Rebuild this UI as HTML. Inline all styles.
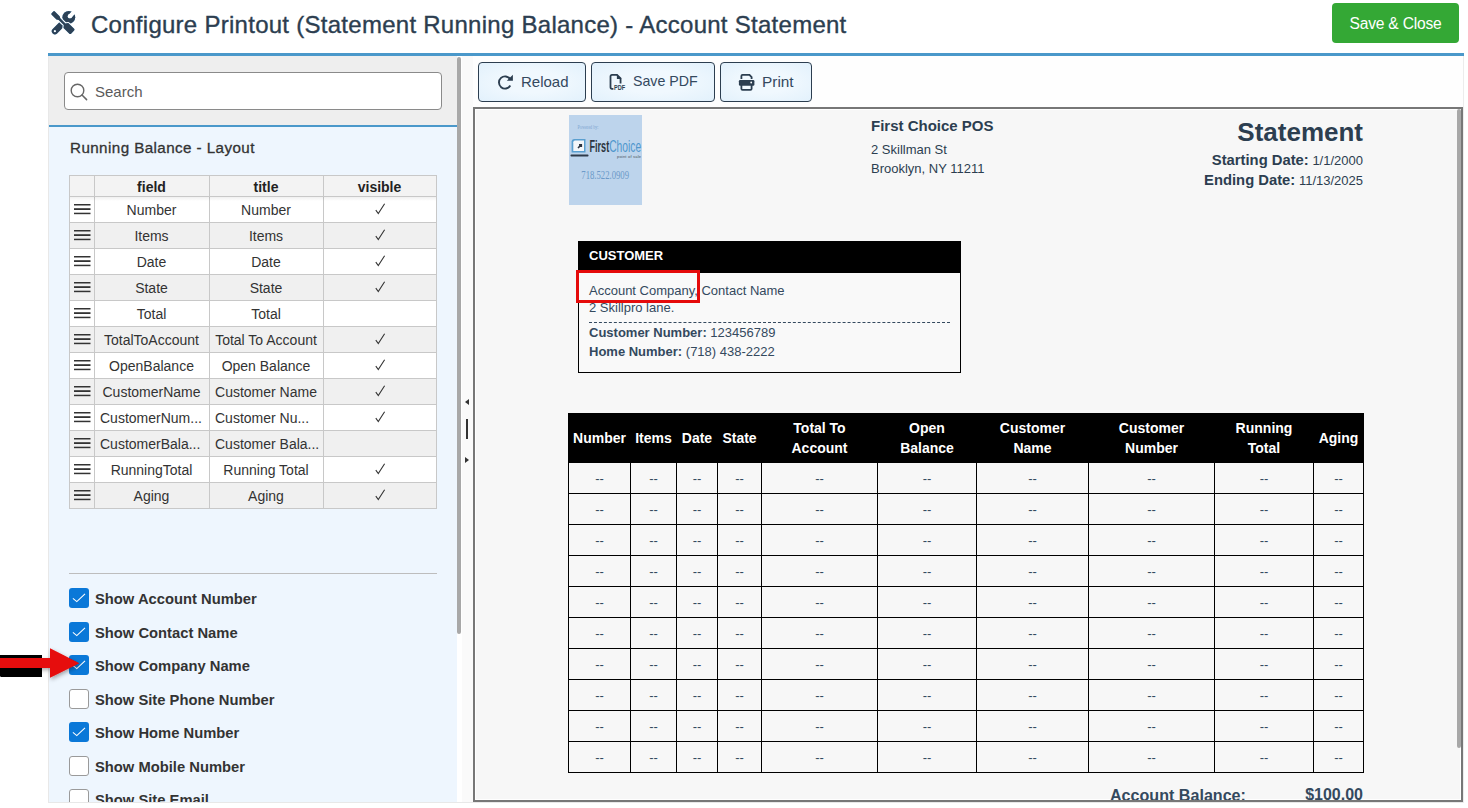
<!DOCTYPE html><html><head><meta charset="utf-8"><style>
*{box-sizing:border-box;margin:0;padding:0}
html,body{width:1468px;height:808px;overflow:hidden;background:#fff;font-family:"Liberation Sans",sans-serif;position:relative}
.abs{position:absolute}
.t{position:absolute;white-space:nowrap;line-height:1}
#title{left:91px;top:13px;font-size:24px;letter-spacing:0.27px;color:#2c3e50;-webkit-text-stroke:0.35px #2c3e50}
#save{left:1332px;top:3px;width:127px;height:40px;background:#34a835;border-radius:4px;color:#fff;font-size:15.6px;letter-spacing:-0.2px;text-align:center;line-height:41px}
#bluebar{left:48px;top:53px;width:1416px;height:3px;background:#4a98ca}
#lp-top{left:48px;top:56px;width:409px;height:69px;background:#eeeeee}
#lp-line{left:49px;top:125px;width:409px;height:2px;background:#4a98ca}
#lp-bot{left:48px;top:127px;width:409px;height:675px;background:#eef6fe}
#search{left:64px;top:72px;width:378px;height:38px;background:#fff;border:1px solid #8a8a8a;border-radius:4px}
#lscroll{left:457px;top:57px;width:4px;height:577px;background:#a8a8a8;border-radius:2px}
#splitter{left:461px;top:56px;width:12px;height:746px;background:#fafafa;border-left:1px solid #fff}
#toolbar{left:473px;top:56px;width:990px;height:51px;background:#fefefe}
#preview{left:473px;top:107px;width:990px;height:695px;border:2px solid #777;background:#f7f7f7;box-shadow:inset 1px 1px 0 #fff,inset -1px -1px 0 #fff;overflow:hidden}
#pscroll{left:1457px;top:109px;width:4px;height:639px;background:#a8a8a8;border-radius:2px}
.btn{position:absolute;top:62px;height:40px;border:1px solid #2c3e50;border-radius:4px;background:radial-gradient(ellipse at center,#f0f8fe 40%,#e2f1fc 100%);color:#34495e;font-size:15px}
.btn span{position:absolute;top:11px;line-height:1;white-space:nowrap}
.btn svg{position:absolute}
.lt{position:absolute;font-size:14px;color:#333;text-align:center;white-space:nowrap;line-height:1}
.cb{position:absolute;left:69px;width:20px;height:20px;border-radius:3px;background:#0a78d8}
.cbo{background:#fff;border:1px solid #9a9a9a}
.cbl{position:absolute;left:95px;font-size:14.75px;font-weight:700;color:#333;white-space:nowrap;line-height:1}
.pv{position:absolute;white-space:nowrap;line-height:1;color:#2c3e50}
.gl{position:absolute;background:#000}
.th{position:absolute;color:#fff;font-weight:700;font-size:14px;line-height:20px;text-align:center}
.td{position:absolute;color:#34495e;font-size:13px;line-height:1;text-align:center}
</style></head><body><div class="abs" id="bluebar"></div><svg class="abs" style="left:48px;top:8px;filter:drop-shadow(0 0 0.7px rgba(100,180,235,0.85))" width="32" height="30" viewBox="0 0 32 30">
<defs><mask id="wm" maskUnits="userSpaceOnUse" x="0" y="0" width="32" height="30">
<rect x="0" y="0" width="32" height="30" fill="#fff"/>
<circle cx="21.9" cy="8.2" r="2.3" fill="#000"/>
<g transform="rotate(-45 21.9 8.2)"><rect x="21.9" y="6.1" width="10" height="4.2" fill="#000"/></g>
<circle cx="6.9" cy="23.2" r="1.15" fill="#000"/>
<g transform="translate(4.6 4.5) rotate(44.4)"><path d="M0.9 -2.3 L7.6 -2.3 L9.6 -1.2 L16.8 -1.2 L18.6 -3.4 L26.8 -3.4 Q28 -3.4 28 -2.2 L28 2.2 Q28 3.4 26.8 3.4 L18.6 3.4 L16.8 1.2 L9.6 1.2 L7.6 2.3 L0.9 2.3 Q-0.2 2.3 -0.2 1.2 L-0.2 -1.2 Q-0.2 -2.3 0.9 -2.3Z" fill="#000" stroke="#000" stroke-width="2.4" stroke-linejoin="round"/></g>
</mask></defs>
<g fill="#2c4156">
 <g mask="url(#wm)">
  <line x1="6.9" y1="23.2" x2="20.5" y2="9.5" stroke="#2c4156" stroke-width="6.2" stroke-linecap="round"/>
  <circle cx="20.8" cy="9.3" r="6.4"/>
 </g>
 <g transform="translate(4.6 4.5) rotate(44.4)"><path d="M0.9 -2.3 L7.6 -2.3 L9.6 -1.2 L16.8 -1.2 L18.6 -3.4 L26.8 -3.4 Q28 -3.4 28 -2.2 L28 2.2 Q28 3.4 26.8 3.4 L18.6 3.4 L16.8 1.2 L9.6 1.2 L7.6 2.3 L0.9 2.3 Q-0.2 2.3 -0.2 1.2 L-0.2 -1.2 Q-0.2 -2.3 0.9 -2.3Z"/></g>
</g>
</svg><div class="t" id="title">Configure Printout (Statement Running Balance) - Account Statement</div><div class="abs" id="save">Save &amp; Close</div><div class="abs" id="lp-top"></div><div class="abs" id="lp-line"></div><div class="abs" id="lp-bot"></div><div class="abs" id="search"></div><svg class="abs" style="left:69px;top:81.5px" width="20" height="20" viewBox="0 0 20 20"><circle cx="8.5" cy="8.5" r="6.3" fill="none" stroke="#666" stroke-width="1.4"/><line x1="13" y1="13" x2="17.6" y2="17.6" stroke="#666" stroke-width="1.5" stroke-linecap="round"/></svg><div class="t" style="left:95px;top:84px;font-size:15px;color:#5a5a5a">Search</div><div class="abs" id="lscroll"></div><div class="abs" id="splitter"></div><div class="abs" id="toolbar"></div><svg class="abs" style="left:463px;top:396px" width="8" height="70" viewBox="0 0 8 70"><path d="M6 3 L2 6 L6 9Z" fill="#333"/><rect x="3" y="23" width="2" height="20" fill="#333"/><path d="M2 61 L6 64 L2 67Z" fill="#333"/></svg><div class="t" style="left:70px;top:140px;font-size:15.2px;letter-spacing:0.42px;-webkit-text-stroke:0.3px #333;color:#333">Running Balance - Layout</div><div class="abs" style="left:69px;top:175px;width:368px;height:21px;background:#f3f3f3"></div><div class="abs" style="left:69px;top:196px;width:368px;height:26px;background:#ffffff"></div><div class="abs" style="left:69px;top:222px;width:368px;height:26px;background:#f0f0f0"></div><div class="abs" style="left:69px;top:248px;width:368px;height:26px;background:#ffffff"></div><div class="abs" style="left:69px;top:274px;width:368px;height:26px;background:#f0f0f0"></div><div class="abs" style="left:69px;top:300px;width:368px;height:26px;background:#ffffff"></div><div class="abs" style="left:69px;top:326px;width:368px;height:26px;background:#f0f0f0"></div><div class="abs" style="left:69px;top:352px;width:368px;height:26px;background:#ffffff"></div><div class="abs" style="left:69px;top:378px;width:368px;height:26px;background:#f0f0f0"></div><div class="abs" style="left:69px;top:404px;width:368px;height:26px;background:#ffffff"></div><div class="abs" style="left:69px;top:430px;width:368px;height:26px;background:#f0f0f0"></div><div class="abs" style="left:69px;top:456px;width:368px;height:26px;background:#ffffff"></div><div class="abs" style="left:69px;top:482px;width:368px;height:26px;background:#f0f0f0"></div><div class="abs" style="left:69px;top:175px;width:1px;height:334px;background:#c8c8c8"></div><div class="abs" style="left:94px;top:175px;width:1px;height:334px;background:#c8c8c8"></div><div class="abs" style="left:209px;top:175px;width:1px;height:334px;background:#c8c8c8"></div><div class="abs" style="left:323px;top:175px;width:1px;height:334px;background:#c8c8c8"></div><div class="abs" style="left:436px;top:175px;width:1px;height:334px;background:#c8c8c8"></div><div class="abs" style="left:69px;top:175px;width:368px;height:1px;background:#c8c8c8"></div><div class="abs" style="left:69px;top:196px;width:368px;height:1px;background:#c8c8c8"></div><div class="abs" style="left:69px;top:222px;width:368px;height:1px;background:#c8c8c8"></div><div class="abs" style="left:69px;top:248px;width:368px;height:1px;background:#c8c8c8"></div><div class="abs" style="left:69px;top:274px;width:368px;height:1px;background:#c8c8c8"></div><div class="abs" style="left:69px;top:300px;width:368px;height:1px;background:#c8c8c8"></div><div class="abs" style="left:69px;top:326px;width:368px;height:1px;background:#c8c8c8"></div><div class="abs" style="left:69px;top:352px;width:368px;height:1px;background:#c8c8c8"></div><div class="abs" style="left:69px;top:378px;width:368px;height:1px;background:#c8c8c8"></div><div class="abs" style="left:69px;top:404px;width:368px;height:1px;background:#c8c8c8"></div><div class="abs" style="left:69px;top:430px;width:368px;height:1px;background:#c8c8c8"></div><div class="abs" style="left:69px;top:456px;width:368px;height:1px;background:#c8c8c8"></div><div class="abs" style="left:69px;top:482px;width:368px;height:1px;background:#c8c8c8"></div><div class="abs" style="left:69px;top:508px;width:368px;height:1px;background:#c8c8c8"></div><div class="abs" style="left:70px;top:197px;width:366px;height:4px;background:linear-gradient(rgba(0,0,0,0.06),rgba(0,0,0,0))"></div><div class="lt" style="left:94px;width:115px;top:180px;font-weight:700;color:#222">field</div><div class="lt" style="left:209px;width:114px;top:180px;font-weight:700;color:#222">title</div><div class="lt" style="left:323px;width:113px;top:180px;font-weight:700;color:#222">visible</div><svg class="abs" style="left:74px;top:203px" width="17" height="12" viewBox="0 0 17 12"><rect x="0" y="1" width="16.5" height="1.5" fill="#333"/><rect x="0" y="5.2" width="16.5" height="1.8" fill="#333"/><rect x="0" y="9.7" width="16.5" height="1.5" fill="#333"/></svg><div class="lt" style="left:94px;width:115px;top:203px">Number</div><div class="lt" style="left:209px;width:114px;top:203px">Number</div><svg class="abs" style="left:375px;top:203px" width="11" height="12" viewBox="0 0 11 12"><path d="M0.8 7.2 L3.3 10.6 L9.6 0.8" fill="none" stroke="#333" stroke-width="1.1"/></svg><svg class="abs" style="left:74px;top:229px" width="17" height="12" viewBox="0 0 17 12"><rect x="0" y="1" width="16.5" height="1.5" fill="#333"/><rect x="0" y="5.2" width="16.5" height="1.8" fill="#333"/><rect x="0" y="9.7" width="16.5" height="1.5" fill="#333"/></svg><div class="lt" style="left:94px;width:115px;top:229px">Items</div><div class="lt" style="left:209px;width:114px;top:229px">Items</div><svg class="abs" style="left:375px;top:229px" width="11" height="12" viewBox="0 0 11 12"><path d="M0.8 7.2 L3.3 10.6 L9.6 0.8" fill="none" stroke="#333" stroke-width="1.1"/></svg><svg class="abs" style="left:74px;top:255px" width="17" height="12" viewBox="0 0 17 12"><rect x="0" y="1" width="16.5" height="1.5" fill="#333"/><rect x="0" y="5.2" width="16.5" height="1.8" fill="#333"/><rect x="0" y="9.7" width="16.5" height="1.5" fill="#333"/></svg><div class="lt" style="left:94px;width:115px;top:255px">Date</div><div class="lt" style="left:209px;width:114px;top:255px">Date</div><svg class="abs" style="left:375px;top:255px" width="11" height="12" viewBox="0 0 11 12"><path d="M0.8 7.2 L3.3 10.6 L9.6 0.8" fill="none" stroke="#333" stroke-width="1.1"/></svg><svg class="abs" style="left:74px;top:281px" width="17" height="12" viewBox="0 0 17 12"><rect x="0" y="1" width="16.5" height="1.5" fill="#333"/><rect x="0" y="5.2" width="16.5" height="1.8" fill="#333"/><rect x="0" y="9.7" width="16.5" height="1.5" fill="#333"/></svg><div class="lt" style="left:94px;width:115px;top:281px">State</div><div class="lt" style="left:209px;width:114px;top:281px">State</div><svg class="abs" style="left:375px;top:281px" width="11" height="12" viewBox="0 0 11 12"><path d="M0.8 7.2 L3.3 10.6 L9.6 0.8" fill="none" stroke="#333" stroke-width="1.1"/></svg><svg class="abs" style="left:74px;top:307px" width="17" height="12" viewBox="0 0 17 12"><rect x="0" y="1" width="16.5" height="1.5" fill="#333"/><rect x="0" y="5.2" width="16.5" height="1.8" fill="#333"/><rect x="0" y="9.7" width="16.5" height="1.5" fill="#333"/></svg><div class="lt" style="left:94px;width:115px;top:307px">Total</div><div class="lt" style="left:209px;width:114px;top:307px">Total</div><svg class="abs" style="left:74px;top:333px" width="17" height="12" viewBox="0 0 17 12"><rect x="0" y="1" width="16.5" height="1.5" fill="#333"/><rect x="0" y="5.2" width="16.5" height="1.8" fill="#333"/><rect x="0" y="9.7" width="16.5" height="1.5" fill="#333"/></svg><div class="lt" style="left:94px;width:115px;top:333px">TotalToAccount</div><div class="lt" style="left:209px;width:114px;top:333px">Total To Account</div><svg class="abs" style="left:375px;top:333px" width="11" height="12" viewBox="0 0 11 12"><path d="M0.8 7.2 L3.3 10.6 L9.6 0.8" fill="none" stroke="#333" stroke-width="1.1"/></svg><svg class="abs" style="left:74px;top:359px" width="17" height="12" viewBox="0 0 17 12"><rect x="0" y="1" width="16.5" height="1.5" fill="#333"/><rect x="0" y="5.2" width="16.5" height="1.8" fill="#333"/><rect x="0" y="9.7" width="16.5" height="1.5" fill="#333"/></svg><div class="lt" style="left:94px;width:115px;top:359px">OpenBalance</div><div class="lt" style="left:209px;width:114px;top:359px">Open Balance</div><svg class="abs" style="left:375px;top:359px" width="11" height="12" viewBox="0 0 11 12"><path d="M0.8 7.2 L3.3 10.6 L9.6 0.8" fill="none" stroke="#333" stroke-width="1.1"/></svg><svg class="abs" style="left:74px;top:385px" width="17" height="12" viewBox="0 0 17 12"><rect x="0" y="1" width="16.5" height="1.5" fill="#333"/><rect x="0" y="5.2" width="16.5" height="1.8" fill="#333"/><rect x="0" y="9.7" width="16.5" height="1.5" fill="#333"/></svg><div class="lt" style="left:94px;width:115px;top:385px">CustomerName</div><div class="lt" style="left:209px;width:114px;top:385px">Customer Name</div><svg class="abs" style="left:375px;top:385px" width="11" height="12" viewBox="0 0 11 12"><path d="M0.8 7.2 L3.3 10.6 L9.6 0.8" fill="none" stroke="#333" stroke-width="1.1"/></svg><svg class="abs" style="left:74px;top:411px" width="17" height="12" viewBox="0 0 17 12"><rect x="0" y="1" width="16.5" height="1.5" fill="#333"/><rect x="0" y="5.2" width="16.5" height="1.8" fill="#333"/><rect x="0" y="9.7" width="16.5" height="1.5" fill="#333"/></svg><div class="lt" style="left:100px;top:411px;text-align:left">CustomerNum...</div><div class="lt" style="left:215px;top:411px;text-align:left">Customer Nu...</div><svg class="abs" style="left:375px;top:411px" width="11" height="12" viewBox="0 0 11 12"><path d="M0.8 7.2 L3.3 10.6 L9.6 0.8" fill="none" stroke="#333" stroke-width="1.1"/></svg><svg class="abs" style="left:74px;top:437px" width="17" height="12" viewBox="0 0 17 12"><rect x="0" y="1" width="16.5" height="1.5" fill="#333"/><rect x="0" y="5.2" width="16.5" height="1.8" fill="#333"/><rect x="0" y="9.7" width="16.5" height="1.5" fill="#333"/></svg><div class="lt" style="left:100px;top:437px;text-align:left">CustomerBala...</div><div class="lt" style="left:215px;top:437px;text-align:left">Customer Bala...</div><svg class="abs" style="left:74px;top:463px" width="17" height="12" viewBox="0 0 17 12"><rect x="0" y="1" width="16.5" height="1.5" fill="#333"/><rect x="0" y="5.2" width="16.5" height="1.8" fill="#333"/><rect x="0" y="9.7" width="16.5" height="1.5" fill="#333"/></svg><div class="lt" style="left:94px;width:115px;top:463px">RunningTotal</div><div class="lt" style="left:209px;width:114px;top:463px">Running Total</div><svg class="abs" style="left:375px;top:463px" width="11" height="12" viewBox="0 0 11 12"><path d="M0.8 7.2 L3.3 10.6 L9.6 0.8" fill="none" stroke="#333" stroke-width="1.1"/></svg><svg class="abs" style="left:74px;top:489px" width="17" height="12" viewBox="0 0 17 12"><rect x="0" y="1" width="16.5" height="1.5" fill="#333"/><rect x="0" y="5.2" width="16.5" height="1.8" fill="#333"/><rect x="0" y="9.7" width="16.5" height="1.5" fill="#333"/></svg><div class="lt" style="left:94px;width:115px;top:489px">Aging</div><div class="lt" style="left:209px;width:114px;top:489px">Aging</div><svg class="abs" style="left:375px;top:489px" width="11" height="12" viewBox="0 0 11 12"><path d="M0.8 7.2 L3.3 10.6 L9.6 0.8" fill="none" stroke="#333" stroke-width="1.1"/></svg><div class="abs" style="left:69px;top:573px;width:368px;height:1px;background:#bdbdbd"></div><div class="cb" style="top:588px"><svg width="20" height="20" viewBox="0 0 20 20" style="position:absolute;left:0;top:0"><path d="M3.9 10.4 L7.8 13.6 L16 5.9" fill="none" stroke="#fff" stroke-width="1.1"/></svg></div><div class="cbl" style="top:592px">Show Account Number</div><div class="cb" style="top:622px"><svg width="20" height="20" viewBox="0 0 20 20" style="position:absolute;left:0;top:0"><path d="M3.9 10.4 L7.8 13.6 L16 5.9" fill="none" stroke="#fff" stroke-width="1.1"/></svg></div><div class="cbl" style="top:626px">Show Contact Name</div><div class="cb" style="top:655px"><svg width="20" height="20" viewBox="0 0 20 20" style="position:absolute;left:0;top:0"><path d="M3.9 10.4 L7.8 13.6 L16 5.9" fill="none" stroke="#fff" stroke-width="1.1"/></svg></div><div class="cbl" style="top:659px">Show Company Name</div><div class="cb cbo" style="top:689px"></div><div class="cbl" style="top:693px">Show Site Phone Number</div><div class="cb" style="top:722px"><svg width="20" height="20" viewBox="0 0 20 20" style="position:absolute;left:0;top:0"><path d="M3.9 10.4 L7.8 13.6 L16 5.9" fill="none" stroke="#fff" stroke-width="1.1"/></svg></div><div class="cbl" style="top:726px">Show Home Number</div><div class="cb cbo" style="top:756px"></div><div class="cbl" style="top:760px">Show Mobile Number</div><div class="cb cbo" style="top:789px"></div><div class="cbl" style="top:793px">Show Site Email</div><div class="abs" style="left:48px;top:802px;width:1416px;height:6px;background:#fff"></div><div class="abs" style="left:48px;top:802px;width:1416px;height:1px;background:#e8e8e8"></div><div class="abs" style="left:48px;top:56px;width:1px;height:747px;background:#e8e8e8"></div><div class="abs" style="left:1463px;top:56px;width:1px;height:747px;background:#ececec"></div><div class="abs" id="preview"></div><div class="abs" style="left:475px;top:109px;width:986px;height:691px;overflow:hidden"><div class="abs" style="left:-475px;top:-109px;width:1468px;height:808px"><div class="abs" style="left:569px;top:115px;width:73px;height:90px;background:#bdd4ec;overflow:hidden">
<svg style="position:absolute;left:0;top:0" width="73" height="20"><text x="8.5" y="13.6" font-family="Liberation Serif" font-size="6" fill="#7ea6d2" textLength="21" lengthAdjust="spacingAndGlyphs">Powered by:</text></svg>
<svg style="position:absolute;left:0;top:22px" width="73" height="22" viewBox="0 0 73 22">
<path d="M2.6 15.5 L2.6 4.5 Q2.6 2 5 2 L16.5 2 L16.5 15.5Z" fill="#5a9fd0"/>
<path d="M4.3 14 L4.3 5.2 Q4.3 3.6 6 3.6 L15 3.6 L15 14Z" fill="#f4f6f9"/>
<path d="M9 11 L12 8 M10 7.8 L12.3 7.8 L12.3 10" stroke="#2a3340" stroke-width="1.6" fill="none"/>
<rect x="1.5" y="17.5" width="18" height="2" rx="0.8" fill="#2f3b4a"/>
<text x="20.5" y="15.2" font-family="Liberation Sans" font-weight="700" font-size="16" fill="#2b3440" textLength="19.7" lengthAdjust="spacingAndGlyphs">First</text>
<text x="40.2" y="15.2" font-family="Liberation Sans" font-size="16" fill="#4f97cc" textLength="32" lengthAdjust="spacingAndGlyphs">Choice</text>
<text x="48" y="20.6" font-family="Liberation Sans" font-size="4" fill="#4a5460" textLength="24" lengthAdjust="spacing">point of sale</text>
</svg>
<svg style="position:absolute;left:0;top:55px" width="73" height="14" viewBox="0 0 73 14"><text x="12.3" y="9.3" font-family="Liberation Serif" font-size="12.4" fill="#6c9ac9" textLength="47.7" lengthAdjust="spacingAndGlyphs">718.522.0909</text></svg>
</div><div class="pv" style="left:871px;top:118px;font-size:15px;font-weight:700">First Choice POS</div><div class="pv" style="left:871px;top:143px;font-size:13px">2 Skillman St</div><div class="pv" style="left:871px;top:162px;font-size:13px">Brooklyn, NY 11211</div><div class="pv" style="left:1000px;width:363px;text-align:right;top:119px;font-size:26px;font-weight:700">Statement</div><div class="pv" style="left:1000px;width:363px;text-align:right;top:153px;font-size:13px"><b style="font-size:14.8px">Starting Date:</b> 1/1/2000</div><div class="pv" style="left:1000px;width:363px;text-align:right;top:173px;font-size:13px"><b style="font-size:14.8px">Ending Date:</b> 11/13/2025</div><div class="abs" style="left:578px;top:241px;width:383px;height:132px;border:1px solid #000;background:#f9f9f9"></div><div class="abs" style="left:578px;top:241px;width:383px;height:32px;background:#000"></div><div class="pv" style="left:589px;top:249px;font-size:13px;font-weight:700;color:#fff">CUSTOMER</div><div class="pv" style="left:589px;top:284px;font-size:13px;color:#34495e">Account Company, Contact Name</div><div class="pv" style="left:589px;top:301px;font-size:13px;color:#34495e">2 Skillpro lane.</div><div class="abs" style="left:589px;top:322px;width:361px;height:0;border-top:1px dashed #34495e"></div><div class="pv" style="left:589px;top:326px;font-size:13px;color:#34495e"><b>Customer Number:</b> 123456789</div><div class="pv" style="left:589px;top:345px;font-size:13px;color:#34495e"><b>Home Number:</b> (718) 438-2222</div><div class="abs" style="left:576px;top:270px;width:124px;height:33px;border:3px solid #e50b0b"></div><div class="abs" style="left:568px;top:413px;width:796px;height:50px;background:#000"></div><div class="th" style="left:568px;width:63px;top:428px">Number</div><div class="th" style="left:630px;width:47px;top:428px">Items</div><div class="th" style="left:676px;width:42px;top:428px">Date</div><div class="th" style="left:717px;width:45px;top:428px">State</div><div class="th" style="left:761px;width:117px;top:418px">Total To<br>Account</div><div class="th" style="left:877px;width:100px;top:418px">Open<br>Balance</div><div class="th" style="left:976px;width:113px;top:418px">Customer<br>Name</div><div class="th" style="left:1088px;width:127px;top:418px">Customer<br>Number</div><div class="th" style="left:1214px;width:100px;top:418px">Running<br>Total</div><div class="th" style="left:1313px;width:51px;top:428px">Aging</div><div class="gl" style="left:568px;top:413px;width:1px;height:360px"></div><div class="gl" style="left:630px;top:413px;width:1px;height:360px"></div><div class="gl" style="left:676px;top:413px;width:1px;height:360px"></div><div class="gl" style="left:717px;top:413px;width:1px;height:360px"></div><div class="gl" style="left:761px;top:413px;width:1px;height:360px"></div><div class="gl" style="left:877px;top:413px;width:1px;height:360px"></div><div class="gl" style="left:976px;top:413px;width:1px;height:360px"></div><div class="gl" style="left:1088px;top:413px;width:1px;height:360px"></div><div class="gl" style="left:1214px;top:413px;width:1px;height:360px"></div><div class="gl" style="left:1313px;top:413px;width:1px;height:360px"></div><div class="gl" style="left:1363px;top:413px;width:1px;height:360px"></div><div class="gl" style="left:568px;top:462px;width:796px;height:1px"></div><div class="gl" style="left:568px;top:493px;width:796px;height:1px"></div><div class="gl" style="left:568px;top:524px;width:796px;height:1px"></div><div class="gl" style="left:568px;top:555px;width:796px;height:1px"></div><div class="gl" style="left:568px;top:586px;width:796px;height:1px"></div><div class="gl" style="left:568px;top:617px;width:796px;height:1px"></div><div class="gl" style="left:568px;top:648px;width:796px;height:1px"></div><div class="gl" style="left:568px;top:679px;width:796px;height:1px"></div><div class="gl" style="left:568px;top:710px;width:796px;height:1px"></div><div class="gl" style="left:568px;top:741px;width:796px;height:1px"></div><div class="gl" style="left:568px;top:772px;width:796px;height:1px"></div><div class="td" style="left:568px;width:63px;top:472px">--</div><div class="td" style="left:630px;width:47px;top:472px">--</div><div class="td" style="left:676px;width:42px;top:472px">--</div><div class="td" style="left:717px;width:45px;top:472px">--</div><div class="td" style="left:761px;width:117px;top:472px">--</div><div class="td" style="left:877px;width:100px;top:472px">--</div><div class="td" style="left:976px;width:113px;top:472px">--</div><div class="td" style="left:1088px;width:127px;top:472px">--</div><div class="td" style="left:1214px;width:100px;top:472px">--</div><div class="td" style="left:1313px;width:51px;top:472px">--</div><div class="td" style="left:568px;width:63px;top:503px">--</div><div class="td" style="left:630px;width:47px;top:503px">--</div><div class="td" style="left:676px;width:42px;top:503px">--</div><div class="td" style="left:717px;width:45px;top:503px">--</div><div class="td" style="left:761px;width:117px;top:503px">--</div><div class="td" style="left:877px;width:100px;top:503px">--</div><div class="td" style="left:976px;width:113px;top:503px">--</div><div class="td" style="left:1088px;width:127px;top:503px">--</div><div class="td" style="left:1214px;width:100px;top:503px">--</div><div class="td" style="left:1313px;width:51px;top:503px">--</div><div class="td" style="left:568px;width:63px;top:534px">--</div><div class="td" style="left:630px;width:47px;top:534px">--</div><div class="td" style="left:676px;width:42px;top:534px">--</div><div class="td" style="left:717px;width:45px;top:534px">--</div><div class="td" style="left:761px;width:117px;top:534px">--</div><div class="td" style="left:877px;width:100px;top:534px">--</div><div class="td" style="left:976px;width:113px;top:534px">--</div><div class="td" style="left:1088px;width:127px;top:534px">--</div><div class="td" style="left:1214px;width:100px;top:534px">--</div><div class="td" style="left:1313px;width:51px;top:534px">--</div><div class="td" style="left:568px;width:63px;top:565px">--</div><div class="td" style="left:630px;width:47px;top:565px">--</div><div class="td" style="left:676px;width:42px;top:565px">--</div><div class="td" style="left:717px;width:45px;top:565px">--</div><div class="td" style="left:761px;width:117px;top:565px">--</div><div class="td" style="left:877px;width:100px;top:565px">--</div><div class="td" style="left:976px;width:113px;top:565px">--</div><div class="td" style="left:1088px;width:127px;top:565px">--</div><div class="td" style="left:1214px;width:100px;top:565px">--</div><div class="td" style="left:1313px;width:51px;top:565px">--</div><div class="td" style="left:568px;width:63px;top:596px">--</div><div class="td" style="left:630px;width:47px;top:596px">--</div><div class="td" style="left:676px;width:42px;top:596px">--</div><div class="td" style="left:717px;width:45px;top:596px">--</div><div class="td" style="left:761px;width:117px;top:596px">--</div><div class="td" style="left:877px;width:100px;top:596px">--</div><div class="td" style="left:976px;width:113px;top:596px">--</div><div class="td" style="left:1088px;width:127px;top:596px">--</div><div class="td" style="left:1214px;width:100px;top:596px">--</div><div class="td" style="left:1313px;width:51px;top:596px">--</div><div class="td" style="left:568px;width:63px;top:627px">--</div><div class="td" style="left:630px;width:47px;top:627px">--</div><div class="td" style="left:676px;width:42px;top:627px">--</div><div class="td" style="left:717px;width:45px;top:627px">--</div><div class="td" style="left:761px;width:117px;top:627px">--</div><div class="td" style="left:877px;width:100px;top:627px">--</div><div class="td" style="left:976px;width:113px;top:627px">--</div><div class="td" style="left:1088px;width:127px;top:627px">--</div><div class="td" style="left:1214px;width:100px;top:627px">--</div><div class="td" style="left:1313px;width:51px;top:627px">--</div><div class="td" style="left:568px;width:63px;top:658px">--</div><div class="td" style="left:630px;width:47px;top:658px">--</div><div class="td" style="left:676px;width:42px;top:658px">--</div><div class="td" style="left:717px;width:45px;top:658px">--</div><div class="td" style="left:761px;width:117px;top:658px">--</div><div class="td" style="left:877px;width:100px;top:658px">--</div><div class="td" style="left:976px;width:113px;top:658px">--</div><div class="td" style="left:1088px;width:127px;top:658px">--</div><div class="td" style="left:1214px;width:100px;top:658px">--</div><div class="td" style="left:1313px;width:51px;top:658px">--</div><div class="td" style="left:568px;width:63px;top:689px">--</div><div class="td" style="left:630px;width:47px;top:689px">--</div><div class="td" style="left:676px;width:42px;top:689px">--</div><div class="td" style="left:717px;width:45px;top:689px">--</div><div class="td" style="left:761px;width:117px;top:689px">--</div><div class="td" style="left:877px;width:100px;top:689px">--</div><div class="td" style="left:976px;width:113px;top:689px">--</div><div class="td" style="left:1088px;width:127px;top:689px">--</div><div class="td" style="left:1214px;width:100px;top:689px">--</div><div class="td" style="left:1313px;width:51px;top:689px">--</div><div class="td" style="left:568px;width:63px;top:720px">--</div><div class="td" style="left:630px;width:47px;top:720px">--</div><div class="td" style="left:676px;width:42px;top:720px">--</div><div class="td" style="left:717px;width:45px;top:720px">--</div><div class="td" style="left:761px;width:117px;top:720px">--</div><div class="td" style="left:877px;width:100px;top:720px">--</div><div class="td" style="left:976px;width:113px;top:720px">--</div><div class="td" style="left:1088px;width:127px;top:720px">--</div><div class="td" style="left:1214px;width:100px;top:720px">--</div><div class="td" style="left:1313px;width:51px;top:720px">--</div><div class="td" style="left:568px;width:63px;top:751px">--</div><div class="td" style="left:630px;width:47px;top:751px">--</div><div class="td" style="left:676px;width:42px;top:751px">--</div><div class="td" style="left:717px;width:45px;top:751px">--</div><div class="td" style="left:761px;width:117px;top:751px">--</div><div class="td" style="left:877px;width:100px;top:751px">--</div><div class="td" style="left:976px;width:113px;top:751px">--</div><div class="td" style="left:1088px;width:127px;top:751px">--</div><div class="td" style="left:1214px;width:100px;top:751px">--</div><div class="td" style="left:1313px;width:51px;top:751px">--</div><div class="pv" style="left:1110px;top:787px;font-size:16.1px;font-weight:700;color:#34495e">Account Balance:</div><div class="pv" style="left:1305px;width:58px;text-align:right;top:787px;font-size:16px;font-weight:700;color:#34495e">$100.00</div></div></div><div class="abs" id="pscroll"></div><div class="btn" style="left:478px;width:108px">
<svg style="left:19px;top:12px;overflow:visible" width="16" height="15" viewBox="0 0 16 15"><path d="M12.2 4.2 A6.1 6.1 0 1 0 12.3 10.6" fill="none" stroke="#2c3e50" stroke-width="1.9"/><path d="M8.8 5.7 L14.9 5.7 L14.9 -0.3Z" fill="#2c3e50"/></svg>
<span style="left:42px">Reload</span></div><div class="btn" style="left:591px;width:124px">
<svg style="left:17px;top:11px;overflow:visible" width="18" height="17" viewBox="0 0 18 17"><path d="M4.4 14.85 L3 14.85 Q1.5 14.85 1.5 13.35 L1.5 2.4 Q1.5 0.9 3 0.9 L8 0.9 L11.55 4.45 L11.55 9.4" fill="none" stroke="#2c3e50" stroke-width="1.8"/><path d="M7.9 0.2 L12.4 4.7 L12.4 5 L7.9 5Z" fill="#2c3e50"/><text x="5.1" y="15.8" font-family="Liberation Sans" font-weight="700" font-size="6.8" fill="#2c3e50" textLength="11.2" lengthAdjust="spacingAndGlyphs">PDF</text></svg>
<span style="left:41px;font-size:14.2px">Save PDF</span></div><div class="btn" style="left:720px;width:92px">
<svg style="left:17.3px;top:10.6px;overflow:visible" width="17" height="17" viewBox="0 0 17 17"><path d="M3.4 5 L3.4 2 Q3.4 0.9 4.5 0.9 L11.5 0.9 L13.6 3 L13.6 5" fill="none" stroke="#2c3e50" stroke-width="1.8"/><rect x="0.9" y="6.1" width="15.5" height="5.7" rx="1.2" fill="#2c3e50"/><circle cx="13.2" cy="8.5" r="0.9" fill="#fff"/><path d="M3.4 10.7 L3.4 14.8 Q3.4 15.9 4.5 15.9 L12.5 15.9 Q13.6 15.9 13.6 14.8 L13.6 10.7" fill="none" stroke="#2c3e50" stroke-width="1.8"/></svg>
<span style="left:41px;font-size:15.4px">Print</span></div><svg class="abs" style="left:0;top:640px" width="90" height="45" viewBox="0 0 90 45">
<defs><filter id="sh" x="-20%" y="-30%" width="150%" height="160%"><feDropShadow dx="1" dy="2" stdDeviation="2" flood-color="#000" flood-opacity="0.35"/></filter></defs>
<path d="M0 15 L42 15 L42 37 L1.5 37 Q0 37 0 35.5Z" fill="#000"/>
<g filter="url(#sh)"><rect x="-2" y="18" width="53" height="10" fill="#e60808"/><path d="M50 8.2 L79.4 23.2 L50 37.8Z" fill="#e60808"/></g>
</svg></body></html>
